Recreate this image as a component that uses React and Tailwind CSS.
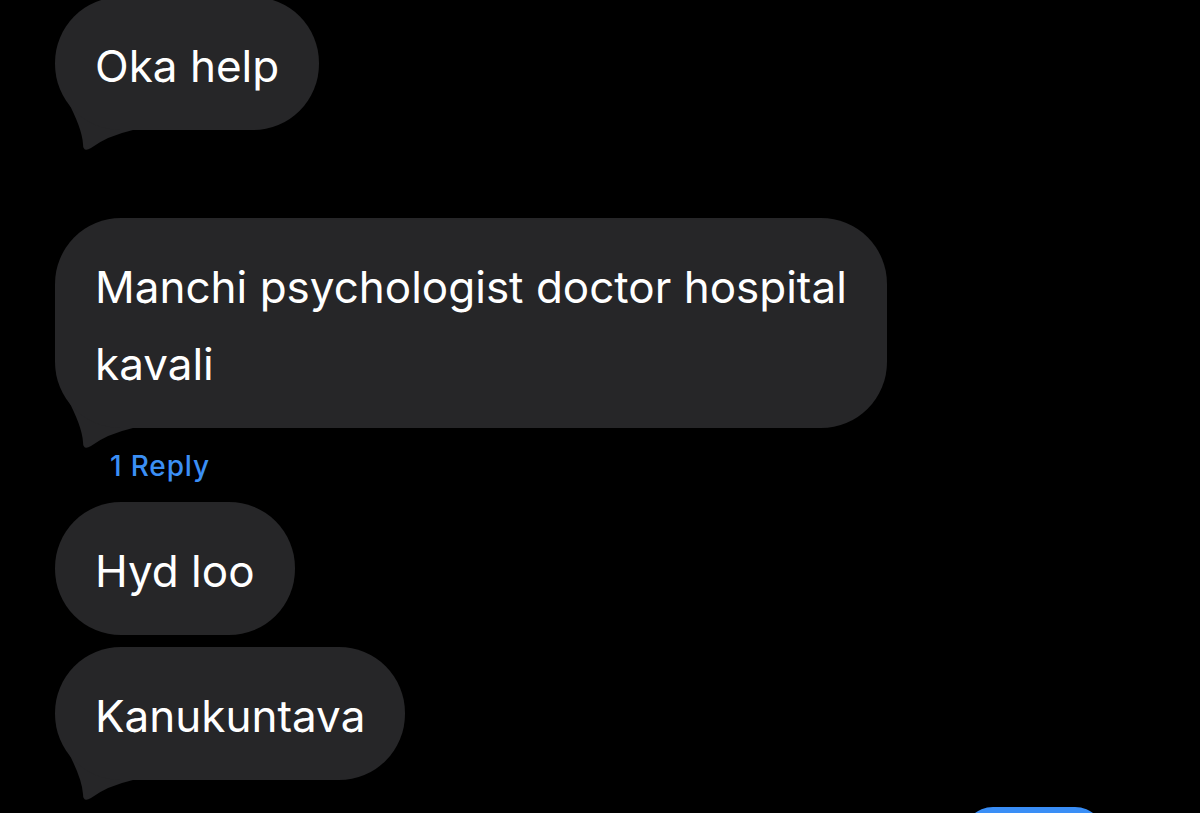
import React from "react";

const FONT = "font-['Inter','Noto_Sans',sans-serif]";

// little curved tail under an incoming bubble
function Tail() {
  return (
    <svg
      className="absolute left-0 -bottom-[30px] h-[60px] w-[90px]"
      viewBox="0 0 90 60"
      aria-hidden
    >
      <path
        d="M12 0 Q27 28 28 44 Q28 53 36 48 Q52 36 78 30 L78 0 Z"
        fill="#262628"
      />
    </svg>
  );
}

function Bubble({ children, tail, className = "" }) {
  return (
    <div className={`relative self-start ${className}`}>
      {tail && <Tail />}
      <div className="relative rounded-[66px] bg-[#262628] px-10 pt-[31px] pb-[25px] text-[44px] leading-[77px] text-white">
        {children}
      </div>
    </div>
  );
}

export default function App() {
  return (
    <div className={`h-[813px] overflow-hidden bg-black ${FONT}`}>
      <div className="flex flex-col pl-[55px] pr-[55px]">
        <Bubble tail className="-mt-[3px]">
          Oka help
        </Bubble>

        <Bubble tail className="mt-[88px]">
          Manchi psychologist doctor hospital
          <br />
          kavali
        </Bubble>
        <span className="mt-[22px] pl-[55px] text-[28px] font-medium leading-[32px] tracking-[0.03em] text-[#3b8ff5]">
          1 Reply
        </span>

        <Bubble className="mt-[20px]">Hyd loo</Bubble>
        <Bubble tail className="mt-[12px]">
          Kanukuntava
        </Bubble>

        <div className="mt-[27px] self-end mr-[40px] h-[60px] w-[142px] rounded-[30px] bg-[#3a8ef6]" />
      </div>
    </div>
  );
}
